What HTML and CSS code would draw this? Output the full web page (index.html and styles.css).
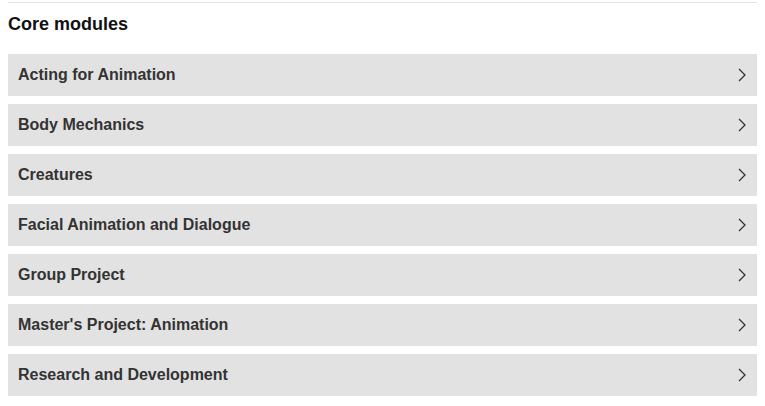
FILE: index.html
```html
<!DOCTYPE html>
<html>
<head>
  <meta name="viewport" content="width=device-width, initial-scale=1">
  <title>Core modules</title>
  <link rel="stylesheet" href="styles.css">
</head>
<body>
  <div class="divider"></div>
  <h3 class="section-title">Core modules</h3>
  <ul class="modules">
    <li class="module">Acting for Animation<svg class="chev" viewBox="0 0 8 14"><path d="M1 1l6 6-6 6"/></svg></li>
    <li class="module">Body Mechanics<svg class="chev" viewBox="0 0 8 14"><path d="M1 1l6 6-6 6"/></svg></li>
    <li class="module">Creatures<svg class="chev" viewBox="0 0 8 14"><path d="M1 1l6 6-6 6"/></svg></li>
    <li class="module">Facial Animation and Dialogue<svg class="chev" viewBox="0 0 8 14"><path d="M1 1l6 6-6 6"/></svg></li>
    <li class="module">Group Project<svg class="chev" viewBox="0 0 8 14"><path d="M1 1l6 6-6 6"/></svg></li>
    <li class="module">Master's Project: Animation<svg class="chev" viewBox="0 0 8 14"><path d="M1 1l6 6-6 6"/></svg></li>
    <li class="module">Research and Development<svg class="chev" viewBox="0 0 8 14"><path d="M1 1l6 6-6 6"/></svg></li>
  </ul>
</body>
</html>
```

FILE: styles.css
```css
html {font-family: "Liberation Sans", Arial, sans-serif;}
body {margin: 0 8px; background: #fff; color: #333;}

.divider {margin-top: 2px; border-top: 1px solid #e3e3e3;}

.section-title {margin: 11px 0 19px; font-size: 18px; line-height: 21px; font-weight: bold; color: #111;}

.modules {list-style: none; margin: 0; padding: 0; display: flex; flex-direction: column; gap: 8px;}
.module {display: flex; align-items: center; justify-content: space-between; height: 42px; padding: 0 10px;
  background: #e2e2e2; font-size: 16px; font-weight: bold; color: #333; cursor: pointer;}
.chev {width: 8px; height: 14px; margin-right: 1px; fill: none; stroke: #333; stroke-width: 1.3;}
```
